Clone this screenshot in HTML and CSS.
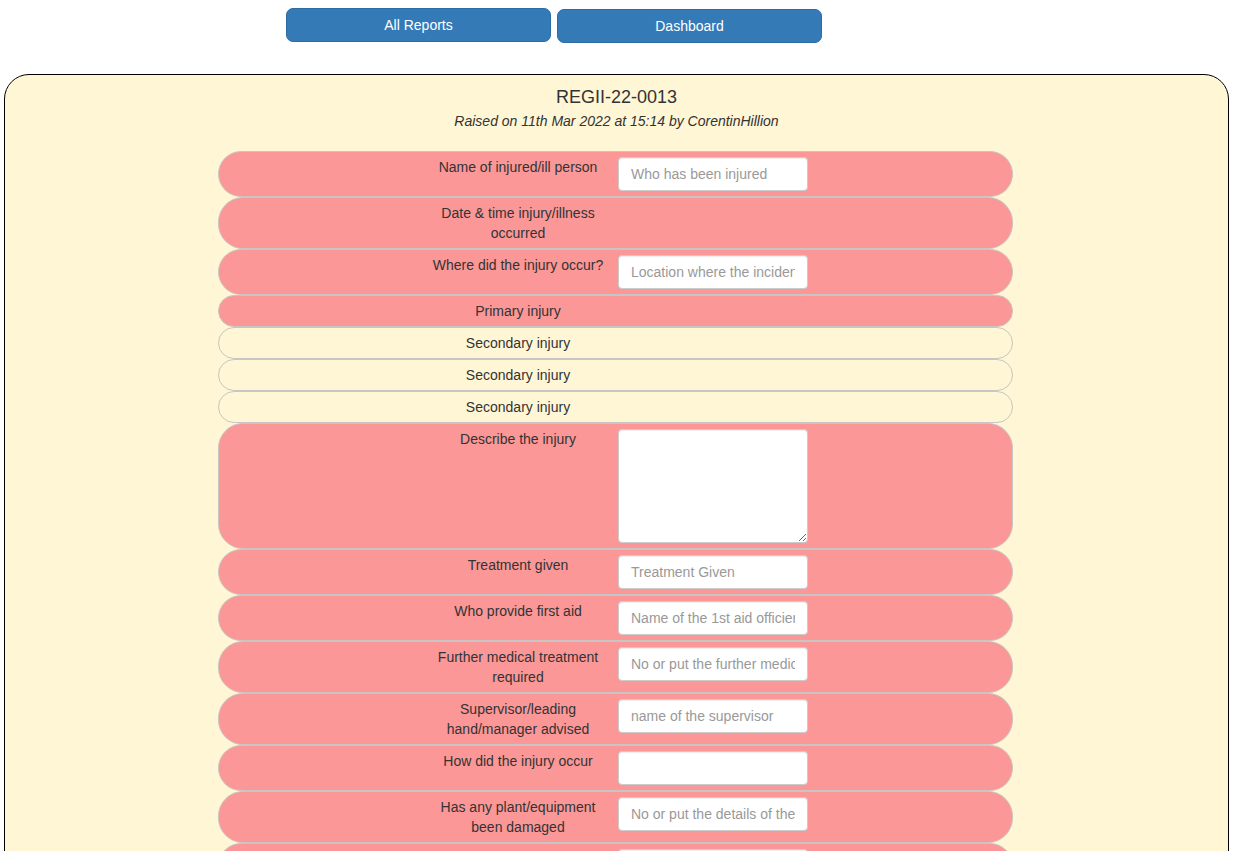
FILE: index.html
```html
<!DOCTYPE html>
<html lang="en">
<head>
<meta charset="utf-8">
<title>REGII-22-0013</title>
<link rel="stylesheet" href="styles.css">
</head>
<body>
<div class="topbar">
  <a class="btn" href="#">All Reports</a>
  <a class="btn btn-low" href="#">Dashboard</a>
</div>
<div class="card">
  <h3 class="title">REGII-22-0013</h3>
  <p class="subtitle">Raised on 11th Mar 2022 at 15:14 by CorentinHillion</p>
  <div class="rows">
    <div class="row pink">
      <label class="lbl">Name of injured/ill person</label>
      <input class="field" type="text" placeholder="Who has been injured">
    </div>
    <div class="row pink">
      <label class="lbl">Date &amp; time injury/illness occurred</label>
      <div></div>
    </div>
    <div class="row pink">
      <label class="lbl">Where did the injury occur?</label>
      <input class="field" type="text" placeholder="Location where the incident occurred">
    </div>
    <div class="row pink">
      <label class="lbl">Primary injury</label>
      <div></div>
    </div>
    <div class="row cream">
      <label class="lbl">Secondary injury</label>
      <div></div>
    </div>
    <div class="row cream">
      <label class="lbl">Secondary injury</label>
      <div></div>
    </div>
    <div class="row cream">
      <label class="lbl">Secondary injury</label>
      <div></div>
    </div>
    <div class="row pink">
      <label class="lbl">Describe the injury</label>
      <textarea class="field area" rows="5"></textarea>
    </div>
    <div class="row pink">
      <label class="lbl">Treatment given</label>
      <input class="field" type="text" placeholder="Treatment Given">
    </div>
    <div class="row pink">
      <label class="lbl">Who provide first aid</label>
      <input class="field" type="text" placeholder="Name of the 1st aid officier">
    </div>
    <div class="row pink">
      <label class="lbl">Further medical treatment required</label>
      <input class="field" type="text" placeholder="No or put the further medical treatment">
    </div>
    <div class="row pink">
      <label class="lbl">Supervisor/leading hand/manager advised</label>
      <input class="field" type="text" placeholder="name of the supervisor">
    </div>
    <div class="row pink">
      <label class="lbl">How did the injury occur</label>
      <input class="field" type="text">
    </div>
    <div class="row pink">
      <label class="lbl">Has any plant/equipment been damaged</label>
      <input class="field" type="text" placeholder="No or put the details of the damage">
    </div>
    <div class="row pink">
      <label class="lbl">Witnesses</label>
      <input class="field" type="text" placeholder="Name of the witnesses">
    </div>
  </div>
</div>
</body>
</html>
```
FILE: styles.css
```css
html {
  scrollbar-width: none;
}
body {
  margin: 0;
  font-family: "Liberation Sans", Arial, Helvetica, sans-serif;
  font-size: 14px;
  line-height: 20px;
  color: #333;
  background: #fff;
}
.topbar {
  display: flex;
  align-items: flex-start;
  gap: 6px;
  padding: 8px 0 0 286px;
  height: 74px;
  box-sizing: border-box;
}
.btn {
  display: block;
  width: 265px;
  box-sizing: border-box;
  padding: 6px 12px;
  border: 1px solid #2e6da4;
  border-radius: 7px;
  background: #337ab7;
  color: #fff;
  text-align: center;
  text-decoration: none;
  font-size: 14px;
  line-height: 20px;
}
.btn-low {
  margin-top: 1px;
}
.card {
  margin: 0 5px 0 4px;
  border: 1px solid #000;
  border-radius: 25px;
  background: #fff6d6;
  padding: 12px 0 30px;
}
.title {
  margin: 0;
  text-align: center;
  font-size: 18px;
  font-weight: normal;
  line-height: 20px;
  color: #333;
}
.subtitle {
  margin: 4px 0 0;
  text-align: center;
  font-style: italic;
  line-height: 20px;
}
.rows {
  width: 795px;
  margin: 20px 0 0 213px;
}
.row {
  display: grid;
  grid-template-columns: 180px 190px;
  column-gap: 10px;
  justify-content: center;
  align-items: start;
  padding: 5px 0 5px 5px;
  border: 1px solid #c9c5c5;
  border-radius: 25px;
}
.pink {
  background: #fb9797;
}
.cream {
  background: #fff6d6;
}
.lbl {
  display: block;
  text-align: center;
  line-height: 20px;
}
.field {
  display: block;
  width: 190px;
  height: 34px;
  box-sizing: border-box;
  margin: 0;
  padding: 6px 12px;
  border: 1px solid #ccc;
  border-radius: 4px;
  background: #fff;
  box-shadow: inset 0 1px 1px rgba(0, 0, 0, 0.075);
  font-family: "Liberation Sans", Arial, Helvetica, sans-serif;
  font-size: 14px;
  line-height: 20px;
  color: #555;
}
.field::placeholder {
  color: #999;
}
.area {
  height: 114px;
  resize: vertical;
}
```
